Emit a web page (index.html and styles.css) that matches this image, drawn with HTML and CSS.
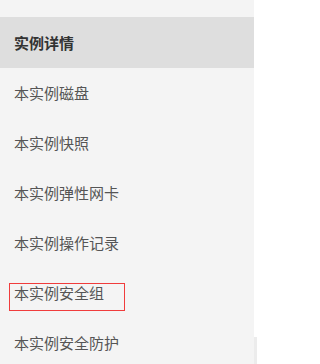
FILE: index.html
```html
<!DOCTYPE html>
<html lang="zh-CN">
<head>
<meta charset="utf-8">
<link rel="stylesheet" href="styles.css">
</head>
<body>
<div class="page">
  <aside class="menu">
    <div class="menu-title">实例详情</div>
    <ul class="menu-list">
      <li class="menu-item">本实例磁盘</li>
      <li class="menu-item">本实例快照</li>
      <li class="menu-item">本实例弹性网卡</li>
      <li class="menu-item">本实例操作记录</li>
      <li class="menu-item menu-item-marked">本实例安全组<span class="mark"></span></li>
      <li class="menu-item">本实例安全防护</li>
    </ul>
  </aside>
  <div class="edge">
    <div class="edge-top"></div>
    <div class="edge-bottom"></div>
  </div>
</div>
</body>
</html>
```
FILE: styles.css
```css
html, body {
  margin: 0;
  padding: 0;
  background: #ffffff;
  height: 100%;
  overflow: hidden;
}
.page {
  display: flex;
  width: 257px;
  height: 364px;
  font-family: "Noto Sans CJK SC", "Microsoft YaHei", sans-serif;
}
.menu {
  width: 254px;
  flex: none;
  background: #f4f4f4;
  padding-top: 17px;
  box-sizing: border-box;
}
.menu-title {
  height: 51px;
  line-height: 51px;
  background: #dedede;
  padding-left: 14px;
  font-size: 15px;
  font-weight: bold;
  color: #333333;
}
.menu-list {
  list-style: none;
  margin: 0;
  padding: 0;
}
.menu-item {
  height: 50px;
  line-height: 50px;
  padding-left: 14px;
  font-size: 15px;
  color: #555555;
}
.menu-item-marked {
  position: relative;
}
.mark {
  position: absolute;
  left: 9px;
  top: 15px;
  width: 116px;
  height: 28px;
  border: 1px solid #f03c3c;
  box-sizing: border-box;
}
.edge {
  width: 3px;
  flex: none;
  display: flex;
  flex-direction: column;
}
.edge-top {
  height: 337px;
  background: #ffffff;
}
.edge-bottom {
  flex: 1;
  background: #ececec;
}
```
